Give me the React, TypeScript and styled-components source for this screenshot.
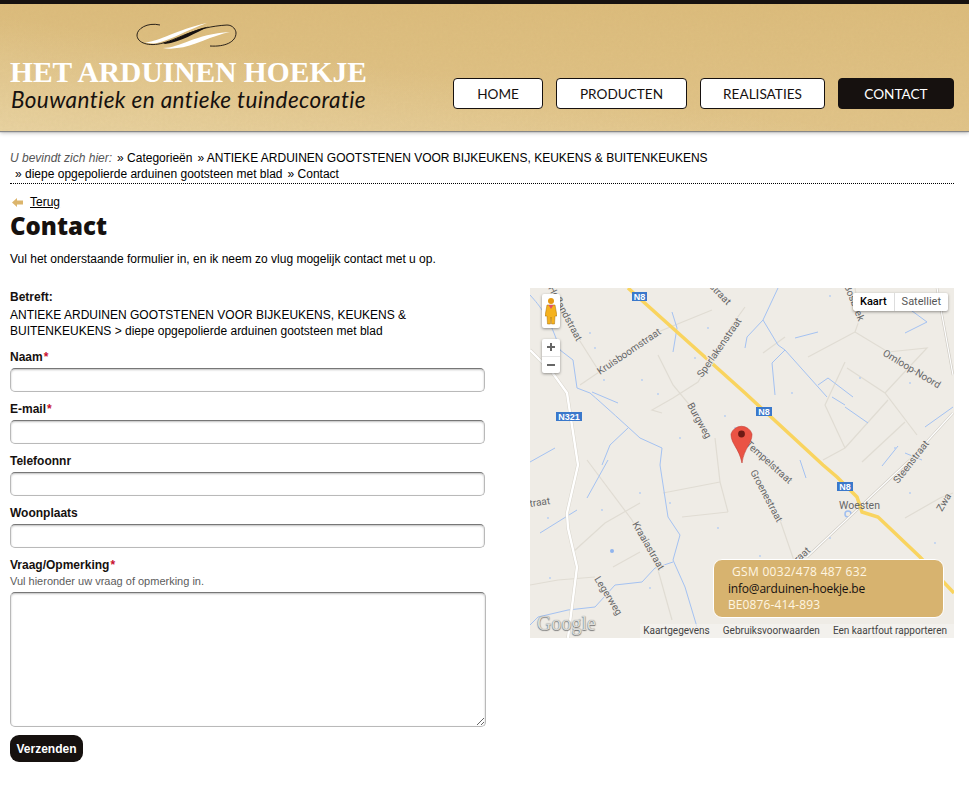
import React from "react";
import styled, { createGlobalStyle } from "styled-components";

const GlobalStyle = createGlobalStyle`
  html, body {
    margin: 0;
    padding: 0;
    background: #fff;
  }
  body {
    font-family: "Liberation Sans", Arial, sans-serif;
    font-size: 12px;
    color: #000;
  }
`;

const paper = encodeURIComponent(
  '<svg xmlns="http://www.w3.org/2000/svg" width="300" height="127"><filter id="n"><feTurbulence type="fractalNoise" baseFrequency="0.35" numOctaves="3"/><feColorMatrix values="0 0 0 0 0.45 0 0 0 0 0.3 0 0 0 0 0.1 0 0 0 0.55 0"/></filter><rect width="300" height="127" filter="url(#n)" opacity="0.15"/></svg>'
);

const Page = styled.div`
  width: 969px;
  height: 797px;
  overflow: hidden;
`;

const Header = styled.header`
  height: 127px;
  border-top: 4px solid #16110f;
  background-color: #dfc083;
  background-image: url("data:image/svg+xml,${paper}"),
    linear-gradient(to top right, rgba(238, 222, 180, 0.55) 0%, rgba(238, 222, 180, 0) 45%),
    linear-gradient(180deg, #dcbc7c 0%, #e1c489 100%);
  box-shadow: 0 1px 1px #888, 0 2px 4px rgba(0, 0, 0, 0.25);
  display: flex;
  justify-content: space-between;
  align-items: flex-end;
  padding: 0 15px 0 10px;
`;

const Brand = styled.div`
  display: flex;
  flex-direction: column;
  align-items: flex-start;
  padding-bottom: 18px;
`;

const Ornament = styled.svg`
  width: 104px;
  height: 28px;
  margin: 0 0 8px 125px;
`;

const BrandName = styled.div`
  font-family: "Liberation Serif", "Times New Roman", serif;
  font-weight: bold;
  font-size: 29.5px;
  line-height: 29px;
  color: #fff;
  white-space: nowrap;
`;

const Tagline = styled.div`
  font-family: Lato, "Open Sans", sans-serif;
  font-style: italic;
  font-size: 22.5px;
  letter-spacing: 0.4px;
  line-height: 26px;
  color: #16110f;
  white-space: nowrap;
  margin-left: 1px;
`;

const Nav = styled.nav`
  display: flex;
  gap: 13px;
  padding-bottom: 22px;
`;

const NavItem = styled.a<{ $width: number; $active?: boolean }>`
  box-sizing: border-box;
  width: ${(p) => p.$width}px;
  height: 31px;
  display: flex;
  align-items: center;
  justify-content: center;
  font-family: Lato, "Open Sans", sans-serif;
  font-size: 13.6px;
  color: ${(p) => (p.$active ? "#fff" : "#16110f")};
  background: ${(p) => (p.$active ? "#16110f" : "#fff")};
  border: 1px solid #16110f;
  border-radius: 4px;
`;

const Content = styled.main`
  padding: 19px 15px 0 10px;
`;

const Breadcrumb = styled.div`
  line-height: 16px;
  padding-bottom: 1px;
  border-bottom: 1px dotted #000;
`;

const CrumbRow = styled.div<{ $indent?: boolean }>`
  padding-left: ${(p) => (p.$indent ? 5 : 0)}px;
  white-space: nowrap;
`;

const Here = styled.em`
  color: #555;
`;

const Crumb = styled.span`
  margin-left: 5px;
`;

const BackRow = styled.div`
  display: flex;
  align-items: center;
  gap: 7px;
  margin: 11px 0 0 2px;
  line-height: 15px;
`;

const BackLink = styled.a`
  color: #000;
  text-decoration: underline;
`;

const Title = styled.h1`
  margin: 0;
  font-family: "Open Sans", "Noto Sans", sans-serif;
  font-weight: 800;
  font-size: 24px;
  line-height: 31px;
  color: #16110f;
`;

const Intro = styled.p`
  margin: 10px 0 0;
  line-height: 16px;
`;

const Columns = styled.div`
  display: grid;
  grid-template-columns: 476px 424px;
  justify-content: space-between;
  margin-top: 21px;
`;

const Form = styled.form`
  display: flex;
  flex-direction: column;
  padding-top: 1px;
`;

const Subject = styled.div`
  line-height: 16px;
  margin-bottom: 10px;
`;

const SubjectLabel = styled.div`
  font-weight: bold;
  color: #16110f;
  margin-bottom: 2px;
`;

const Field = styled.div`
  display: flex;
  flex-direction: column;
  margin-bottom: 9px;
`;

const Label = styled.label`
  font-weight: bold;
  line-height: 16px;
  color: #16110f;
  margin-bottom: 3px;
`;

const Required = styled.span`
  color: #c8102e;
  margin-left: 1px;
`;

const Hint = styled.div`
  font-size: 11px;
  line-height: 14px;
  color: #5c5c5c;
  margin: -2px 0 4px;
`;

const Input = styled.input`
  box-sizing: border-box;
  width: 475px;
  height: 24px;
  padding: 0 4px;
  background: #fff;
  border: 1px solid #b9b9b9;
  border-top-color: #777;
  border-radius: 5px;
  box-shadow: inset 0 1px 2px rgba(0, 0, 0, 0.25);
  outline: none;
`;

const TextArea = styled.textarea`
  box-sizing: border-box;
  display: block;
  width: 476px;
  height: 135px;
  padding: 4px;
  background: #fff;
  border: 1px solid #b9b9b9;
  border-top-color: #777;
  border-radius: 5px;
  box-shadow: inset 0 1px 2px rgba(0, 0, 0, 0.25);
  outline: none;
`;

const Submit = styled.button`
  align-self: flex-start;
  width: 73px;
  height: 27px;
  margin-top: -1px;
  padding: 0;
  border: 0;
  border-radius: 9px;
  background: #16110f;
  color: #fff;
  font-family: "Liberation Sans", Arial, sans-serif;
  font-size: 12px;
  font-weight: bold;
`;

const MapFrame = styled.div`
  position: relative;
  width: 424px;
  height: 350px;
  overflow: hidden;
  background: #efece6;
`;

const MapDrawing = styled.svg`
  display: block;
  width: 424px;
  height: 350px;
`;

const ControlCard = styled.div`
  position: absolute;
  left: 12px;
  width: 18px;
  background: #fff;
  border-radius: 2px;
  box-shadow: 0 1px 3px rgba(0, 0, 0, 0.4);
`;

const PegmanCard = styled(ControlCard)`
  top: 6px;
  height: 34px;
  display: flex;
  align-items: center;
  justify-content: center;
`;

const ZoomCard = styled(ControlCard)`
  top: 51px;
  height: 34px;
  display: flex;
  flex-direction: column;
`;

const ZoomButton = styled.div<{ $divided?: boolean }>`
  flex: 1;
  display: flex;
  align-items: center;
  justify-content: center;
  border-top: ${(p) => (p.$divided ? "1px solid #e4e4e4" : "0")};
  color: #666;
`;

const MapType = styled.div`
  position: absolute;
  top: 5px;
  right: 6px;
  display: flex;
  height: 18px;
  background: #fff;
  border-radius: 2px;
  box-shadow: 0 1px 3px rgba(0, 0, 0, 0.4);
  font-family: Roboto, Arial, sans-serif;
  font-size: 11px;
  line-height: 18px;
`;

const MapTypeOption = styled.div<{ $active?: boolean }>`
  padding: 0 7px;
  color: ${(p) => (p.$active ? "#000" : "#565656")};
  font-weight: ${(p) => (p.$active ? 500 : 400)};
  & + & {
    border-left: 1px solid #ddd;
  }
`;

const GoogleMark = styled.div`
  position: absolute;
  left: 7px;
  bottom: 4px;
  font-family: "Liberation Serif", serif;
  font-size: 20px;
  line-height: 22px;
  color: #dcdcd9;
  text-shadow: 0 0 1px #777, 0 1px 1px #777;
`;

const MapFooter = styled.div`
  position: absolute;
  right: 0;
  bottom: 0;
  height: 14px;
  padding: 0 7px 0 3px;
  display: flex;
  gap: 13px;
  background: rgba(245, 244, 240, 0.7);
  font-family: Roboto, Arial, sans-serif;
  font-size: 10px;
  line-height: 14px;
  color: #444;
`;

const ContactBox = styled.div`
  position: absolute;
  top: 271px;
  left: 183px;
  box-sizing: border-box;
  width: 231px;
  height: 59px;
  padding: 4px 14px;
  background: #d7b36f;
  border: 1px solid #fff;
  border-radius: 9px;
  font-family: "Open Sans", "Noto Sans", sans-serif;
  font-size: 12px;
  line-height: 16.5px;
  color: #fff6e2;
  letter-spacing: 0.1px;
  white-space: nowrap;
`;

const ContactPhone = styled.div`
  padding-left: 4px;
  letter-spacing: 0.3px;
`;

const ContactMail = styled.div`
  color: #16110f;
  letter-spacing: -0.2px;
`;

const canals = [
  "M0 7 C10 18 20 30 30 62 L43 72 L47 100 L60 105 C75 118 88 130 98 139 L110 150 L132 160 L130 177 L138 229 L150 247 L143 272 L155 299 L167 339",
  "M143 274 L125 280 L112 294 L85 297 L65 319 L38 322 L8 329 L0 337",
  "M10 245 L47 222",
  "M78 172 L57 210",
  "M98 140 L80 157 L72 177",
  "M62 104 L88 115",
  "M0 174 L25 160",
  "M142 24 L147 40 L143 64",
  "M248 0 L233 32 L217 49 L215 60 M233 32 L248 57 L255 62 L242 75 L245 107",
  "M255 62 L297 109 M288 97 L298 90 L323 109 M302 109 L315 117 M315 119 L338 135",
  "M265 50 L288 44",
  "M375 45 L397 34 L378 20",
  "M395 139 L423 119",
  "M352 178 L368 158 M375 165 L392 172",
  "M226 160 L238 170 M270 172 L276 190",
];

const lanes = [
  "M128 67 L143 97 L158 115 L178 147",
  "M57 172 L102 232 L128 282 L142 332",
  "M20 0 L48 50 L67 80",
  "M50 97 L128 44 L182 22",
  "M215 19 L202 37 L168 94 L143 110 L122 122 L132 125",
  "M0 297 L28 292 L65 289",
  "M43 264 L75 235 L110 215",
  "M83 279 L110 264",
  "M133 205 L190 194",
  "M152 229 L198 224",
  "M233 65 L255 49",
  "M278 69 L325 44",
  "M325 44 L358 64 L397 60 L355 105",
  "M315 74 L295 117 L315 160",
  "M317 80 L355 105 L387 147",
  "M358 112 L315 160 L293 172",
  "M332 174 L375 134",
  "M325 0 L330 30 L325 44",
  "M223 184 L250 232 L270 290",
  "M198 224 L190 194 L185 150",
  "M375 230 L410 210 L423 205",
];

const specks = [
  [60, 45], [74, 92], [112, 92], [128, 106], [165, 70], [178, 40], [150, 150],
  [195, 128], [262, 105], [300, 8], [336, 22], [380, 95], [330, 90], [365, 160],
  [72, 222], [110, 205], [120, 300], [20, 290], [140, 215], [188, 240], [230, 268],
  [300, 250], [380, 205], [405, 255], [18, 230], [65, 60], [205, 140],
];

const labels = [
  { text: "Hoflandstraat", x: 18, y: 0, angle: 62 },
  { text: "Kruisboomstraat", x: 70, y: 87, angle: -34 },
  { text: "Sperlakenstraat", x: 172, y: 90, angle: -55 },
  { text: "straat", x: 179, y: -1, angle: 46 },
  { text: "Burgweg", x: 157, y: 117, angle: 61 },
  { text: "Bosbeek", x: 314, y: -2, angle: 68 },
  { text: "Omloop-Noord", x: 352, y: 67, angle: 31 },
  { text: "Steenstraat", x: 368, y: 196, angle: -52 },
  { text: "Tempelstraat", x: 215, y: 157, angle: 42 },
  { text: "Groenestraat", x: 220, y: 184, angle: 62 },
  { text: "Kraaiastraat", x: 102, y: 236, angle: 60 },
  { text: "Legerweg", x: 64, y: 291, angle: 58 },
  { text: "Zwa", x: 412, y: 224, angle: -60 },
  { text: "traat", x: 0, y: 219, angle: -8 },
  { text: "raat", x: 268, y: 275, angle: -42 },
];

const shields = [
  { text: "N8", x: 102, y: 4, w: 15 },
  { text: "N321", x: 26, y: 124, w: 26 },
  { text: "N8", x: 226, y: 119, w: 16 },
  { text: "N8", x: 307, y: 194, w: 16 },
];

const Scroll = () => (
  <Ornament viewBox="0 0 104 28">
    <path
      d="M25 3 C12 0 2 7 2 13 C2 21 14 25 28 21 C46 16 60 5 92 3 C98 3 101 8 101 11 C101 20 90 25 75 24"
      fill="none"
      stroke="#16110f"
      strokeWidth="0.9"
    />
    <path d="M28 21 C42 18 55 8 74 4.5 C60 11 46 20 30 22 Z" fill="#16110f" />
    <path d="M10 20 C22 21 40 8 72 1 C52 8 36 18 22 21 C18 22 13 21 10 20 Z" fill="#fff" />
    <path d="M28 26 C45 26 60 12 95 10 C78 13 58 25 42 26 C36 27 32 27 28 26 Z" fill="#fff" />
  </Ornament>
);

const Pegman = () => (
  <svg width="12" height="28" viewBox="0 0 12 28">
    <circle cx="6" cy="4" r="3" fill="#e59a12" />
    <path
      d="M2 8 H10 L12 19 H10 L9.5 27 H6.6 L6 20 L5.4 27 H2.5 L2 19 H0 Z"
      fill="#f5b21e"
      stroke="#a86f0a"
      strokeWidth="0.5"
    />
    <path d="M3.5 8 H8.5 L6 12 Z" fill="#e0506a" />
  </svg>
);

const MapCanvas = () => (
  <MapDrawing viewBox="0 0 424 350">
    <rect width="424" height="350" fill="#efece6" />
    {lanes.map((d) => (
      <path key={d} d={d} fill="none" stroke="#e0dcd3" strokeWidth="1.2" />
    ))}
    {canals.map((d) => (
      <path key={d} d={d} fill="none" stroke="#a4c2f2" strokeWidth="1" />
    ))}
    {specks.map(([cx, cy]) => (
      <circle key={`${cx}-${cy}`} cx={cx} cy={cy} r="0.9" fill="#b4cdf3" />
    ))}
    <circle cx="318" cy="226" r="3" fill="none" stroke="#9fbef0" strokeWidth="1.5" />
    <circle cx="82" cy="263" r="2" fill="#8fb4ee" />
    <path
      d="M277 269 L367 184 L380 172 L423 125 M407 0 L423 87"
      fill="none"
      stroke="#cfcbc3"
      strokeWidth="2.5"
    />
    <path
      d="M277 269 L367 184 L380 172 L423 125 M407 0 L423 87"
      fill="none"
      stroke="#fff"
      strokeWidth="1.2"
    />
    <path
      d="M0 62 L22 84 L37 105 L48 177 L37 225 L38 240 L47 279 L38 350"
      fill="none"
      stroke="#d9d5cc"
      strokeWidth="3.4"
    />
    <path
      d="M0 62 L22 84 L37 105 L48 177 L37 225 L38 240 L47 279 L38 350"
      fill="none"
      stroke="#fff"
      strokeWidth="2.4"
    />
    <path
      d="M98 0 L215 105 L293 177 L307 189 L327 209 L332 224 L348 229 L390 269 L424 305"
      fill="none"
      stroke="#f9d45f"
      strokeWidth="3.5"
    />
    {labels.map((l) => (
      <text
        key={l.text}
        x={l.x}
        y={l.y}
        transform={`rotate(${l.angle} ${l.x} ${l.y})`}
        fontFamily="Roboto, Arial, sans-serif"
        fontSize="10"
        fill="#666"
        stroke="#efece6"
        strokeWidth="2"
        paintOrder="stroke"
      >
        {l.text}
      </text>
    ))}
    <text x="309" y="221" fontFamily="Roboto, Arial, sans-serif" fontSize="10.5" fill="#666">
      Woesten
    </text>
    {shields.map((s) => (
      <g key={`${s.x}-${s.y}`}>
        <rect x={s.x} y={s.y} width={s.w} height="9" fill="#3a78cb" />
        <text
          x={s.x + s.w / 2}
          y={s.y + 8}
          textAnchor="middle"
          fontFamily="Liberation Sans, Arial, sans-serif"
          fontSize="9"
          fontWeight="bold"
          fill="#fff"
        >
          {s.text}
        </text>
      </g>
    ))}
    <path
      d="M212 175 C209 160 201 156 201 146 A11 11 0 0 1 222 146 C222 156 214 160 212 175 Z"
      fill="#ea5344"
      stroke="#c23a30"
      strokeWidth="0.6"
    />
    <circle cx="211.5" cy="146" r="3.4" fill="#6d1a14" />
  </MapDrawing>
);

const App = () => {
  return (
    <Page>
      <GlobalStyle />
      <Header>
        <Brand>
          <Scroll />
          <BrandName>HET ARDUINEN HOEKJE</BrandName>
          <Tagline>Bouwantiek en antieke tuindecoratie</Tagline>
        </Brand>
        <Nav>
          <NavItem $width={90}>HOME</NavItem>
          <NavItem $width={131}>PRODUCTEN</NavItem>
          <NavItem $width={125}>REALISATIES</NavItem>
          <NavItem $width={116} $active>
            CONTACT
          </NavItem>
        </Nav>
      </Header>

      <Content>
        <Breadcrumb>
          <CrumbRow>
            <Here>U bevindt zich hier:</Here>
            <Crumb>» Categorieën</Crumb>
            <Crumb>» ANTIEKE ARDUINEN GOOTSTENEN VOOR BIJKEUKENS, KEUKENS &amp; BUITENKEUKENS</Crumb>
          </CrumbRow>
          <CrumbRow $indent>
            » diepe opgepolierde arduinen gootsteen met blad
            <Crumb>» Contact</Crumb>
          </CrumbRow>
        </Breadcrumb>

        <BackRow>
          <svg width="11" height="9" viewBox="0 0 11 9">
            <path d="M0 4.5 L5 0 V2.5 H11 V6.5 H5 V9 Z" fill="#dcb56c" />
          </svg>
          <BackLink>Terug</BackLink>
        </BackRow>
        <Title>Contact</Title>
        <Intro>Vul het onderstaande formulier in, en ik neem zo vlug mogelijk contact met u op.</Intro>

        <Columns>
          <Form>
            <Subject>
              <SubjectLabel>Betreft:</SubjectLabel>
              ANTIEKE ARDUINEN GOOTSTENEN VOOR BIJKEUKENS, KEUKENS &amp;
              <br />
              BUITENKEUKENS &gt; diepe opgepolierde arduinen gootsteen met blad
            </Subject>
            <Field>
              <Label>
                Naam<Required>*</Required>
              </Label>
              <Input />
            </Field>
            <Field>
              <Label>
                E-mail<Required>*</Required>
              </Label>
              <Input />
            </Field>
            <Field>
              <Label>Telefoonnr</Label>
              <Input />
            </Field>
            <Field>
              <Label>Woonplaats</Label>
              <Input />
            </Field>
            <Field>
              <Label>
                Vraag/Opmerking<Required>*</Required>
              </Label>
              <Hint>Vul hieronder uw vraag of opmerking in.</Hint>
              <TextArea />
            </Field>
            <Submit type="button">Verzenden</Submit>
          </Form>

          <MapFrame>
            <MapCanvas />
            <PegmanCard>
              <Pegman />
            </PegmanCard>
            <ZoomCard>
              <ZoomButton>
                <svg width="10" height="10" viewBox="0 0 10 10">
                  <path d="M5 1 V9 M1 5 H9" stroke="#666" strokeWidth="2" />
                </svg>
              </ZoomButton>
              <ZoomButton $divided>
                <svg width="10" height="10" viewBox="0 0 10 10">
                  <path d="M1 5 H9" stroke="#666" strokeWidth="2" />
                </svg>
              </ZoomButton>
            </ZoomCard>
            <MapType>
              <MapTypeOption $active>Kaart</MapTypeOption>
              <MapTypeOption>Satelliet</MapTypeOption>
            </MapType>
            <GoogleMark>Google</GoogleMark>
            <MapFooter>
              <span>Kaartgegevens</span>
              <span>Gebruiksvoorwaarden</span>
              <span>Een kaartfout rapporteren</span>
            </MapFooter>
            <ContactBox>
              <ContactPhone>GSM 0032/478 487 632</ContactPhone>
              <ContactMail>info@arduinen-hoekje.be</ContactMail>
              <div>BE0876-414-893</div>
            </ContactBox>
          </MapFrame>
        </Columns>
      </Content>
    </Page>
  );
};

export default App;
